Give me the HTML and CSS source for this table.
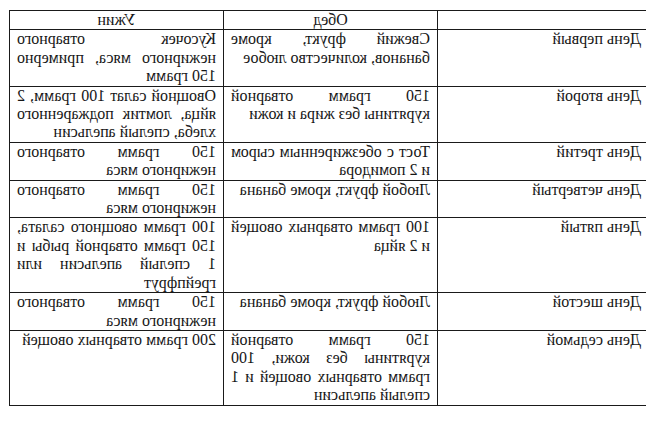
FILE: index.html
```
<!DOCTYPE html>
<html lang="ru">
<head>
<meta charset="utf-8">
<link rel="stylesheet" href="styles.css">
</head>
<body>
<table class="diet">
  <colgroup>
    <col class="c-day">
    <col class="c-lunch">
    <col class="c-dinner">
  </colgroup>
  <thead>
    <tr><th></th><th>Обед</th><th>Ужин</th></tr>
  </thead>
  <tbody>
    <tr><td class="day">День первый</td><td>Свежий фрукт, кроме бананов, количество любое</td><td>Кусочек отварного нежирного мяса, примерно 150 грамм</td></tr>
    <tr><td class="day">День второй</td><td>150 грамм отварной курятины без жира и кожи</td><td>Овощной салат 100 грамм, 2 яйца, ломтик поджаренного хлеба, спелый апельсин</td></tr>
    <tr><td class="day">День третий</td><td>Тост с обезжиренным сыром и 2 помидора</td><td>150 грамм отварного нежирного мяса</td></tr>
    <tr><td class="day">День четвертый</td><td>Любой фрукт, кроме банана</td><td>150 грамм отварного нежирного мяса</td></tr>
    <tr><td class="day">День пятый</td><td>100 грамм отварных овощей и 2 яйца</td><td>100 грамм овощного салата, 150 грамм отварной рыбы и 1 спелый апельсин или грейпфрут</td></tr>
    <tr><td class="day">День шестой</td><td>Любой фрукт, кроме банана</td><td>150 грамм отварного нежирного мяса</td></tr>
    <tr><td class="day">День седьмой</td><td>150 грамм отварной курятины без кожи, 100 грамм отварных овощей и 1 спелый апельсин</td><td>200 грамм отварных овощей</td></tr>
  </tbody>
</table>
</body>
</html>
```
FILE: styles.css
```
html, body {
  background: #ffffff;
}
body {
  margin: 8px;
  font-family: "Liberation Serif", "Times New Roman", serif;
  font-size: 16px;
  color: #161616;
}
.diet {
  margin: 2px 0 0 1px;
  width: 639px;
  table-layout: fixed;
  border-collapse: collapse;
  transform: scaleX(-1);
}
.c-day { width: 211px; }
.c-lunch { width: 214px; }
.c-dinner { width: 214px; }
.diet th,
.diet td {
  border: 1px solid #1a1a1a;
  padding: 0 7px;
  vertical-align: top;
  line-height: 18.4px;
}
.diet th {
  font-weight: normal;
  text-align: center;
}
.diet td {
  text-align: justify;
}
.diet td.day {
  text-align: left;
}
```
